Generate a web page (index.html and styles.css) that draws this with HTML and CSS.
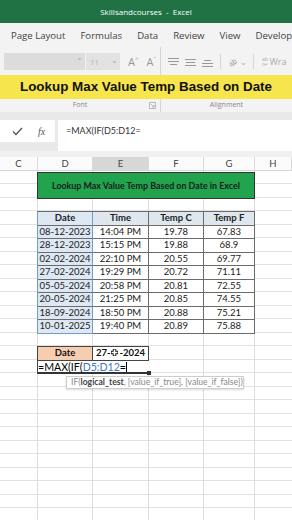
FILE: index.html
```html
<!DOCTYPE html>
<html lang="en">
<head>
    <meta charset="UTF-8">
    <meta name="viewport" content="width=device-width, initial-scale=1.0">
    <title>Lookup Max Value Temp</title>
    <link rel="stylesheet" href="styles.css">
</head>
<body>
    <!-- title bar -->
    <div class="titlebar">Skillsandcourses&nbsp; - &nbsp;Excel</div>

    <!-- ribbon tabs -->
    <div class="tabs">
        <span>Page Layout</span>
        <span>Formulas</span>
        <span>Data</span>
        <span>Review</span>
        <span>View</span>
        <span>Develope</span>
    </div>

    <!-- ribbon groups (greyed out while editing) -->
    <div class="ribbon">
        <div class="group font_group">
            <div class="controls">
                <div class="fontname"><span class="caret">&#8964;</span></div>
                <div class="fontsize">11<span class="caret">&#8964;</span></div>
                <span class="grow">A<sup>^</sup></span>
                <span class="grow">A<sup>&#711;</sup></span>
            </div>
            <div class="label">Font
                <svg class="launcher" width="7" height="7" viewBox="0 0 7 7"><path d="M0.5 0.5h6v6h-6z M2 2l3 3 M5 3v2h-2" fill="none" stroke="#aaa" stroke-width="0.8"/></svg>
            </div>
        </div>
        <div class="group align_group">
            <div class="controls">
                <svg width="13" height="10" viewBox="0 0 13 10"><path d="M1 1.5h11M1 4.5h11M3 7.5h7" stroke="#999" stroke-width="1"/></svg>
                <svg width="13" height="10" viewBox="0 0 13 10"><path d="M1 2.5h11M2 5.5h9M1 8.5h11" stroke="#999" stroke-width="1"/></svg>
                <svg width="13" height="10" viewBox="0 0 13 10"><path d="M3 3.5h7M1 6.5h11M1 9.5h11" stroke="#999" stroke-width="1"/></svg>
                <span class="sep"></span>
                <span class="orient"><svg width="12" height="10" viewBox="0 0 12 10"><text x="1" y="8" font-size="7" fill="#999" transform="rotate(-35 5 5)" font-family="Open Sans">ab</text><path d="M6 9l4-4" stroke="#999" stroke-width="0.8"/></svg><span class="caret small">&#8964;</span></span>
                <span class="sep"></span>
                <span class="wrap"><span class="wrap_icon">ab<br>c&#8629;</span>Wra</span>
            </div>
            <div class="label">Alignment</div>
        </div>
        <!-- caption laid over the ribbon -->
        <div class="banner">Lookup Max Value Temp Based on Date</div>
    </div>

    <!-- formula bar -->
    <div class="formula_area">
        <div class="fx_box">
            <svg width="11" height="9" viewBox="0 0 11 9"><path d="M1 4.5l3 3L10 1" fill="none" stroke="#555" stroke-width="1.3"/></svg>
            <span class="fx">fx</span>
        </div>
        <div class="formula_input">=MAX(IF(D5:D12=</div>
    </div>

    <!-- column headers -->
    <div class="col_heads">
        <div>C</div>
        <div>D</div>
        <div class="active">E</div>
        <div>F</div>
        <div>G</div>
        <div>H</div>
    </div>

    <!-- worksheet -->
    <div class="sheet">
        <div class="green_title">Lookup Max Value Temp Based on Date in Excel</div>

        <div class="data">
            <div class="head date">Date</div><div class="head">Time</div><div class="head">Temp C</div><div class="head">Temp F</div>
            <div class="date">08-12-2023</div><div>14:04 PM</div><div>19.78</div><div>67.83</div>
            <div class="date">28-12-2023</div><div>15:15 PM</div><div>19.88</div><div>68.9</div>
            <div class="date">02-02-2024</div><div>22:10 PM</div><div>20.55</div><div>69.77</div>
            <div class="date">27-02-2024</div><div>19:29 PM</div><div>20.72</div><div>71.11</div>
            <div class="date">05-05-2024</div><div>20:58 PM</div><div>20.81</div><div>72.55</div>
            <div class="date">20-05-2024</div><div>21:25 PM</div><div>20.85</div><div>74.55</div>
            <div class="date">18-09-2024</div><div>18:50 PM</div><div>20.88</div><div>75.21</div>
            <div class="date last">10-01-2025</div><div>19:40 PM</div><div>20.89</div><div>75.88</div>
        </div>

        <div class="lookup">
            <div class="key">Date</div>
            <div class="val">27-<svg class="move" width="9" height="9" viewBox="0 0 9 9"><path d="M4.5 1v7M1 4.5h7" stroke="#111" stroke-width="3.4"/><path d="M4.5 1.6v5.8M1.6 4.5h5.8" stroke="#fff" stroke-width="1.6"/></svg>-2024</div>
            <div class="formula_cell">=MAX(IF(<span class="ref">D5:D12</span>=<span class="caret_line"></span></div>
        </div>

        <div class="tooltip">IF(<b>logical_test</b>, [value_if_true], [value_if_false])</div>
    </div>
</body>
</html>
```

FILE: styles.css
```css
*{
    margin: 0;
    padding: 0;
    box-sizing: border-box;
}
body{
    width: 292px;
    height: 520px;
    overflow: hidden;
    background-color: #fff;
    font-family: "Open Sans", sans-serif;
}
.titlebar{
    height: 23px;
    background-color: #207245;
    color: #fff;
    font-size: 8px;
    line-height: 23px;
    text-align: center;
}
.tabs{
    height: 24px;
    background-color: #f3f3f3;
    display: flex;
    align-items: center;
    gap: 15px;
    padding-left: 11px;
    font-size: 9.6px;
    color: #444;
    white-space: nowrap;
    overflow: hidden;
}
/* ribbon */
.ribbon{
    position: relative;
    height: 65px;
    background-color: #f3f3f3;
    display: flex;
    color: #999;
}
.group{
    display: flex;
    flex-direction: column;
    justify-content: space-between;
    padding: 6px 0 1px;
}
.font_group{
    width: 161px;
    border-right: 1px solid #d6d6d6;
}
.align_group{
    flex: 1;
}
.controls{
    height: 17px;
    display: flex;
    align-items: center;
}
.fontname{
    width: 81px;
    height: 17px;
    margin-left: 4px;
    background-color: #dcdcdc;
    position: relative;
}
.fontsize{
    width: 34px;
    height: 17px;
    margin-left: 1px;
    background-color: #e2e2e2;
    font-size: 8px;
    line-height: 17px;
    padding-left: 4px;
    color: #b5b5b5;
    position: relative;
}
.caret{
    position: absolute;
    right: 2px;
    top: -2px;
    font-size: 8px;
    color: #aaa;
}
.caret.small{
    position: static;
    margin-left: 1px;
}
.grow{
    font-size: 11px;
    margin-left: 8px;
    color: #999;
}
.grow sup{
    font-size: 6px;
}
.label{
    font-size: 7px;
    line-height: 12px;
    text-align: center;
    color: #888;
    position: relative;
}
.launcher{
    position: absolute;
    right: 4px;
    top: 3px;
}
.align_group .controls{
    padding-left: 6px;
    gap: 4px;
}
.sep{
    width: 1px;
    height: 15px;
    background-color: #d6d6d6;
    margin: 0 2px;
}
.orient{
    display: flex;
    align-items: center;
    font-size: 8px;
}
.wrap{
    display: flex;
    align-items: center;
    font-size: 9px;
    color: #aaa;
    margin-left: 2px;
}
.wrap_icon{
    font-size: 5px;
    line-height: 5px;
    margin-right: 1px;
}
.banner{
    position: absolute;
    left: 0;
    right: 0;
    top: 28px;
    height: 24px;
    background-color: #f6e54c;
    color: #111;
    font-family: "Liberation Sans", Arial, sans-serif;
    font-weight: bold;
    font-size: 13.4px;
    line-height: 24px;
    text-align: center;
}
/* formula bar */
.formula_area{
    height: 39px;
    background-color: #e9e9e9;
    display: flex;
    align-items: flex-start;
    padding-top: 8px;
}
.fx_box{
    width: 55px;
    height: 22px;
    background-color: #fff;
    display: flex;
    align-items: center;
    padding-left: 12px;
}
.fx{
    font-family: "Liberation Serif", serif;
    font-style: italic;
    font-size: 10px;
    color: #555;
    margin-left: 15px;
}
.formula_input{
    flex: 1;
    height: 31px;
    margin-left: 3px;
    background-color: #fff;
    font-family: Lato, sans-serif;
    font-size: 9px;
    color: #333;
    padding: 5px 0 0 8px;
}
/* column headers */
.col_heads{
    display: grid;
    grid-template-columns: 38px 55px 56px 55px 51px 1fr;
    height: 20px;
    padding-top: 6px;
    background-color: #f0f0f0;
}
.col_heads div{
    background-color: #fbfbfb;
    border-right: 1px solid #d9d9d9;
    border-bottom: 1px solid #d4d4d4;
    font-family: Lato, sans-serif;
    font-size: 9.5px;
    line-height: 13px;
    text-align: center;
    color: #444;
}
.col_heads .active{
    background-color: #d7d7d7;
}
/* worksheet grid */
.sheet{
    position: relative;
    height: 349px;
    padding-top: 0.5px;
    background:
        linear-gradient(#dcdcdc, #dcdcdc) 37px 0 / 1px 100% no-repeat,
        linear-gradient(#dcdcdc, #dcdcdc) 92px 0 / 1px 100% no-repeat,
        linear-gradient(#dcdcdc, #dcdcdc) 148px 0 / 1px 100% no-repeat,
        linear-gradient(#dcdcdc, #dcdcdc) 203px 0 / 1px 100% no-repeat,
        linear-gradient(#dcdcdc, #dcdcdc) 254px 0 / 1px 100% no-repeat,
        repeating-linear-gradient(to bottom, transparent 0, transparent 12.5px, #e2e2e2 12.5px, #e2e2e2 13.5px);
    font-family: Lato, sans-serif;
}
.green_title{
    width: 218px;
    height: 27px;
    margin-left: 37px;
    background-color: #22a44f;
    border: 1px solid #333;
    color: #1b1b1b;
    font-weight: bold;
    font-size: 8.9px;
    line-height: 25px;
    text-align: center;
    white-space: nowrap;
}
.data{
    width: 218px;
    margin: 12.5px 0 0 37px;
    display: grid;
    grid-template-columns: 55px 56px 55px 51px;
    grid-auto-rows: 13.5px;
    border-left: 1px solid #6b6b6b;
    border-top: 1px solid #6b6b6b;
    background-color: #fff;
}
.data div{
    border-right: 1px solid #6b6b6b;
    border-bottom: 1px solid #6b6b6b;
    font-size: 9.5px;
    line-height: 12.5px;
    text-align: center;
    color: #222;
}
.data .head{
    background-color: #dfe6ee;
    font-weight: bold;
}
.data .date{
    background-color: #dde8f3;
    border-right-color: #6f9dd3;
    box-shadow: -1px 0 0 #6f9dd3;
}
.data .last{
    border-bottom-color: #6f9dd3;
}
.lookup{
    width: 112px;
    margin: 12.5px 0 0 37px;
    display: grid;
    grid-template-columns: 55px 56px;
    grid-auto-rows: 13.5px;
    border-left: 1px solid #444;
    border-top: 1px solid #444;
}
.lookup .key,
.lookup .val{
    border-right: 1px solid #444;
    border-bottom: 1px solid #444;
    font-weight: bold;
    font-size: 9.5px;
    line-height: 12.5px;
    text-align: center;
    color: #111;
}
.lookup .key{
    background-color: #f7cdb0;
}
.lookup .val{
    background-color: #fff;
}
.move{
    vertical-align: -1px;
}
.formula_cell{
    grid-column: 1 / -1;
    position: relative;
    background-color: #fff;
    border-bottom: 2px solid #333;
    font-size: 10.6px;
    line-height: 12px;
    color: #000;
    white-space: nowrap;
}
.formula_cell::after{
    content: "";
    position: absolute;
    right: -2px;
    bottom: -3px;
    width: 4px;
    height: 4px;
    background-color: #333;
}
.ref{
    color: #3d78c9;
}
.caret_line{
    display: inline-block;
    width: 1px;
    height: 10px;
    background-color: #000;
    vertical-align: -1px;
}
.tooltip{
    position: absolute;
    left: 66px;
    top: 205px;
    width: 178px;
    height: 13px;
    padding: 0 4px;
    border: 1px solid #cdcdcd;
    background-color: #fff;
    box-shadow: 0 1px 2px rgba(0,0,0,0.15);
    font-family: Lato, sans-serif;
    font-size: 8.6px;
    line-height: 11px;
    color: #888;
    white-space: nowrap;
    overflow: hidden;
}
.tooltip b{
    color: #444;
}
```
